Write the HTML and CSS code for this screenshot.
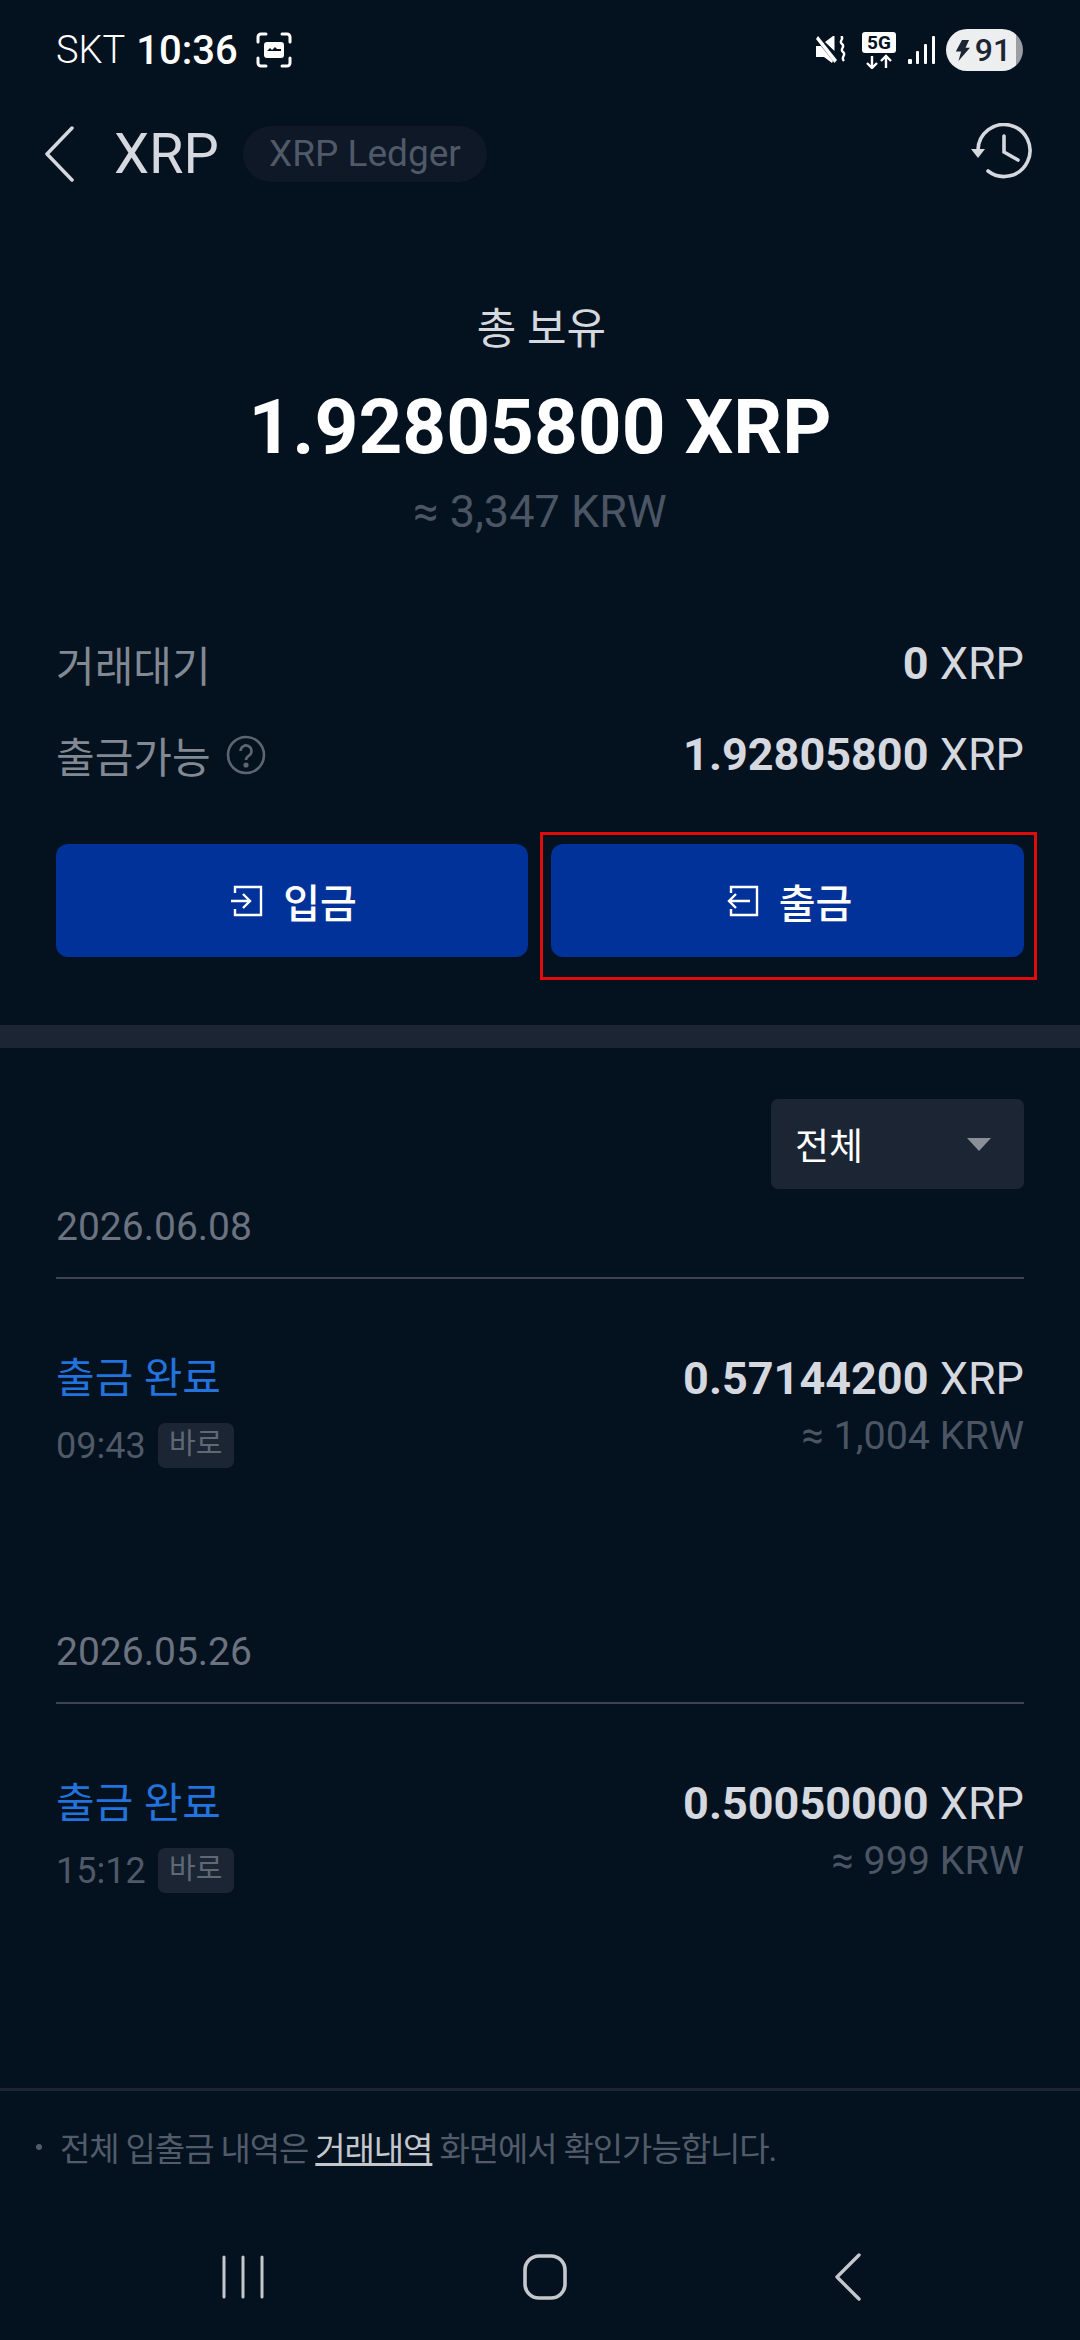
FILE: index.html
```html
<!DOCTYPE html>
<html lang="ko">
<head>
    <meta charset="UTF-8">
    <meta name="viewport" content="width=device-width, initial-scale=1.0">
    <title>XRP</title>
    <link rel="stylesheet" href="styles.css">
</head>
<body>
    <div class="screen">
        <!-- Status bar -->
        <div class="status-bar">
            <div class="status-left">
                <span class="carrier">SKT</span>
                <span class="clock">10:36</span>
                <svg class="shot-icon" width="36" height="36" viewBox="0 0 36 36" fill="none" stroke="#fff" stroke-width="3" stroke-linecap="round">
                    <path d="M2 10V5a3 3 0 0 1 3-3h5M26 2h5a3 3 0 0 1 3 3v5M34 26v5a3 3 0 0 1-3 3h-5M10 34H5a3 3 0 0 1-3-3v-5"/>
                    <rect x="8" y="10" width="20" height="16" rx="3" fill="#fff" stroke="none"/>
                    <path d="M11 19l3-3 2 2 3-3 2 2 4 0v2H11z" fill="#04111f" stroke="none"/>
                </svg>
            </div>
            <div class="status-right">
                <svg class="mute-icon" width="30" height="28" viewBox="0 0 30 28" fill="#fff">
                    <path d="M2 0l19 24-2.500 3L0 3z"/>
                    <path d="M0 10h5l12 15-1 2-8-6H0zM9 6l8-6h1.500v15z"/>
                    <path d="M25 0c4 3-3 5 1 8s-3 5 1 8-3 5 1 9" fill="none" stroke="#fff" stroke-width="2.400"/>
                </svg>
                <svg class="net-icon" width="34" height="37" viewBox="0 0 34 37">
                    <rect width="34" height="21" rx="3" fill="#fff"/>
                    <text x="17" y="17" class="net-text" text-anchor="middle">5G</text>
                    <path d="M10 24v12M5 31l5 5 5-5M24 36V24M19 29l5-5 5 5" fill="none" stroke="#fff" stroke-width="2.400"/>
                </svg>
                <svg class="signal-icon" width="28" height="28" viewBox="0 0 28 28" fill="#fff">
                    <rect x="0" y="23" width="4" height="5" rx="1"/>
                    <rect x="8" y="15" width="3" height="13" rx="1"/>
                    <rect x="16" y="8" width="3" height="20" rx="1"/>
                    <rect x="24" y="0" width="3" height="28" rx="1"/>
                </svg>
                <div class="battery">
                    <svg width="16" height="23" viewBox="0 0 18 26" fill="#1b2533"><path d="M9 1h8l-4 9h5L5 25l3-11H2z"/></svg>
                    <span>91</span>
                </div>
            </div>
        </div>

        <!-- Header -->
        <div class="header">
            <div class="header-left">
                <svg width="30" height="56" viewBox="0 0 30 56" fill="none" stroke="#d5d8de" stroke-width="3.500" stroke-linecap="round" stroke-linejoin="round">
                    <path d="M27 2L2 28l25 26"/>
                </svg>
                <span class="coin-name">XRP</span>
                <span class="network-pill">XRP Ledger</span>
            </div>
            <svg class="history-icon" width="64" height="58" viewBox="0 0 64 58" fill="none" stroke="#d5d8de" stroke-width="3.600" stroke-linecap="round">
                <path d="M7 27A26 26 0 1 1 17 48"/>
                <path d="M33 13v16l14 8"/>
                <path d="M0 26h14l-7 9z" fill="#d5d8de" stroke="none"/>
            </svg>
        </div>

        <!-- Balance -->
        <div class="balance">
            <div class="balance-label">총 보유</div>
            <div class="balance-amount">1.92805800 XRP</div>
            <div class="balance-krw">≈ 3,347 KRW</div>
        </div>

        <div class="info-rows">
            <div class="info-row">
                <span class="info-label">거래대기</span>
                <span class="info-value"><b>0</b> XRP</span>
            </div>
            <div class="info-row">
                <span class="info-label">출금가능
                    <svg width="40" height="40" viewBox="0 0 40 40" fill="none" stroke="#5e6570" stroke-width="2.600">
                        <circle cx="20" cy="20" r="18"/>
                        <path d="M14.500 16a5.500 5.500 0 1 1 8.500 4.600c-2 1.300-3 2.400-3 4.400"/>
                        <circle cx="20" cy="30" r="1.300" fill="#5e6570"/>
                    </svg>
                </span>
                <span class="info-value"><b>1.92805800</b> XRP</span>
            </div>
        </div>

        <div class="buttons">
            <div class="action-btn">
                <svg width="32" height="32" viewBox="0 0 32 32" fill="none" stroke="#fff" stroke-width="2.400">
                    <path d="M4 8V2h26v28H4v-6"/>
                    <path d="M0 16h19M12 9l7 7-7 7"/>
                </svg>
                <span>입금</span>
            </div>
            <div class="action-btn">
                <svg width="32" height="32" viewBox="0 0 32 32" fill="none" stroke="#fff" stroke-width="2.400">
                    <path d="M4 8V2h26v28H4v-6"/>
                    <path d="M23 16H2M9 9l-7 7 7 7"/>
                </svg>
                <span>출금</span>
            </div>
            <div class="highlight"></div>
        </div>

        <div class="section-gap"></div>

        <!-- History -->
        <div class="history">
            <div class="filter-row">
                <div class="filter">
                    <span>전체</span>
                    <i class="caret"></i>
                </div>
            </div>

            <div class="group">
                <div class="group-date">2026.06.08</div>
                <div class="tx">
                    <div>
                        <div class="tx-title">출금 완료</div>
                        <div class="tx-meta">09:43 <span class="tag">바로</span></div>
                    </div>
                    <div class="tx-right">
                        <div class="tx-amount"><b>0.57144200</b> XRP</div>
                        <div class="tx-krw">≈ 1,004 KRW</div>
                    </div>
                </div>
            </div>

            <div class="group">
                <div class="group-date">2026.05.26</div>
                <div class="tx">
                    <div>
                        <div class="tx-title">출금 완료</div>
                        <div class="tx-meta">15:12 <span class="tag">바로</span></div>
                    </div>
                    <div class="tx-right">
                        <div class="tx-amount"><b>0.50050000</b> XRP</div>
                        <div class="tx-krw">≈ 999 KRW</div>
                    </div>
                </div>
            </div>
        </div>

        <!-- Footer note -->
        <div class="note">
            <span class="note-dot"></span>
            <span>전체 입출금 내역은 <u>거래내역</u> 화면에서 확인가능합니다.</span>
        </div>

        <!-- Android nav -->
        <div class="nav-bar">
            <svg class="nav-recent" width="44" height="44" viewBox="0 0 44 44" fill="none" stroke="#c4c7cc" stroke-width="3" stroke-linecap="round">
                <path d="M3 2v40M22 2v40M41 2v40"/>
            </svg>
            <svg class="nav-home" width="44" height="46" viewBox="0 0 44 46" fill="none" stroke="#c4c7cc" stroke-width="3.600">
                <rect x="2" y="2" width="40" height="42" rx="14"/>
            </svg>
            <svg class="nav-back" width="28" height="48" viewBox="0 0 28 48" fill="none" stroke="#c4c7cc" stroke-width="3.400" stroke-linecap="round" stroke-linejoin="round">
                <path d="M25 2L3 24l22 22"/>
            </svg>
        </div>
    </div>
</body>
</html>
```

FILE: styles.css
```css
* {
    box-sizing: border-box;
}
body {
    margin: 0;
    background-color: #04111f;
    font-family: Roboto, "Noto Sans CJK KR", sans-serif;
    color: #d5d8de;
}
.screen {
    position: relative;
    width: 1080px;
    height: 2340px;
    overflow: hidden;
    display: flex;
    flex-direction: column;
}
b {
    font-weight: 700;
}

/* Status bar */
.status-bar {
    height: 100px;
    padding: 0 56px;
    display: flex;
    justify-content: space-between;
    align-items: center;
    color: #fff;
}
.status-left {
    display: flex;
    align-items: center;
}
.carrier {
    font-size: 38px;
    font-weight: 300;
}
.clock {
    margin-left: 11px;
    font-size: 40px;
    font-weight: 500;
}
.shot-icon {
    margin-left: 18px;
}
.status-right {
    display: flex;
    align-items: center;
    margin-right: 1px;
}
.net-icon {
    margin-left: 16px;
}
.signal-icon {
    margin-left: 12px;
}
.net-text {
    font-family: Roboto, sans-serif;
    font-size: 19px;
    font-weight: 700;
    fill: #04111f;
}
.battery {
    margin-left: 10px;
    width: 77px;
    height: 42px;
    border-radius: 21px;
    background: linear-gradient(90deg, #eceef0 91%, #9a9da3 91%);
    color: #1b2533;
    display: flex;
    align-items: center;
    justify-content: center;
    gap: 5px;
    padding-right: 4px;
    font-size: 32px;
    font-weight: 500;
}

/* Header */
.header {
    height: 108px;
    padding: 0 45px;
    display: flex;
    justify-content: space-between;
    align-items: center;
}
.header-left {
    display: flex;
    align-items: center;
}
.coin-name {
    margin-left: 39px;
    font-size: 56px;
    font-weight: 400;
}
.network-pill {
    margin-left: 24px;
    height: 56px;
    padding: 0 26px;
    border-radius: 28px;
    background-color: #0e1827;
    color: #4f5968;
    font-size: 37px;
    line-height: 56px;
}
.history-icon {
    margin-bottom: 4px;
}

/* Balance */
.balance {
    margin-top: 93px;
    text-align: center;
}
.balance-label {
    height: 56px;
    padding-left: 3px;
    line-height: 56px;
    font-size: 43px;
}
.balance-amount {
    margin-top: 22px;
    height: 96px;
    line-height: 96px;
    font-size: 76.500px;
    font-weight: 700;
    color: #fff;
}
.balance-krw {
    margin-top: 9px;
    height: 56px;
    line-height: 56px;
    font-size: 45px;
    color: #4b5563;
}

/* Info rows */
.info-rows {
    margin-top: 78px;
    padding: 0 56px;
}
.info-row {
    height: 91px;
    display: flex;
    justify-content: space-between;
    align-items: center;
    font-size: 45px;
}
.info-label {
    display: flex;
    align-items: center;
    gap: 15px;
    font-size: 42px;
    color: #828993;
}
.info-value {
    color: #d5d8de;
}

/* Buttons */
.buttons {
    position: relative;
    margin-top: 44px;
    padding: 0 56px;
    display: grid;
    grid-template-columns: 472px 473px;
    column-gap: 23px;
}
.action-btn {
    height: 113px;
    padding-left: 4px;
    border-radius: 12px;
    background-color: #013299;
    color: #fff;
    display: flex;
    align-items: center;
    justify-content: center;
    gap: 20px;
    font-size: 40px;
    font-weight: 500;
}
.highlight {
    position: absolute;
    left: 540px;
    top: -12px;
    width: 497px;
    height: 148px;
    border: 3px solid #e00c0c;
}
.section-gap {
    margin-top: 68px;
    height: 23px;
    flex: none;
    background-color: #1b2533;
}

/* History */
.history {
    flex: 1;
    padding: 51px 56px 0;
}
.filter-row {
    display: flex;
    justify-content: flex-end;
}
.filter {
    width: 253px;
    height: 90px;
    padding: 0 33px 0 24px;
    border-radius: 7px;
    background-color: #1b2533;
    color: #fff;
    font-size: 37px;
    display: flex;
    align-items: center;
    justify-content: space-between;
}
.caret {
    width: 0;
    height: 0;
    border-left: 12px solid transparent;
    border-right: 12px solid transparent;
    border-top: 13px solid #8b8f98;
}
.group {
    height: 425px;
}
.group-date {
    height: 90px;
    padding-top: 14px;
    line-height: 48px;
    font-size: 39px;
    color: #6b7280;
    border-bottom: 2px solid #3b4452;
}
.tx {
    margin-top: 76px;
    display: flex;
    justify-content: space-between;
}
.tx-title {
    height: 48px;
    line-height: 48px;
    font-size: 42px;
    color: #2273dd;
}
.tx-meta {
    margin-top: 20px;
    display: flex;
    align-items: center;
    gap: 12px;
    font-size: 36px;
    color: #4f5968;
}
.tag {
    width: 76px;
    height: 45px;
    line-height: 42px;
    text-align: center;
    border-radius: 7px;
    background-color: #1b2533;
    font-size: 29px;
    color: #5f6875;
}
.tx-right {
    text-align: right;
}
.tx-amount {
    height: 48px;
    line-height: 48px;
    font-size: 45px;
}
.tx-krw {
    margin-top: 9px;
    height: 48px;
    line-height: 48px;
    font-size: 39.500px;
    color: #4b5563;
}

/* Note */
.note {
    height: 114px;
    padding: 0 0 0 36px;
    border-top: 3px solid #1b2533;
    display: flex;
    align-items: center;
    gap: 18px;
    font-size: 33px;
    letter-spacing: -1.100px;
    color: #515b69;
}
.note u {
    color: #c4c7cc;
}
.note-dot {
    width: 6px;
    height: 6px;
    border-radius: 50%;
    background-color: #515b69;
}

/* Android nav */
.nav-bar {
    height: 138px;
    padding-top: 11px;
    display: flex;
    align-items: center;
}
.nav-recent {
    margin-left: 221px;
}
.nav-home {
    margin-left: 258px;
}
.nav-back {
    margin-left: 267px;
}
```
